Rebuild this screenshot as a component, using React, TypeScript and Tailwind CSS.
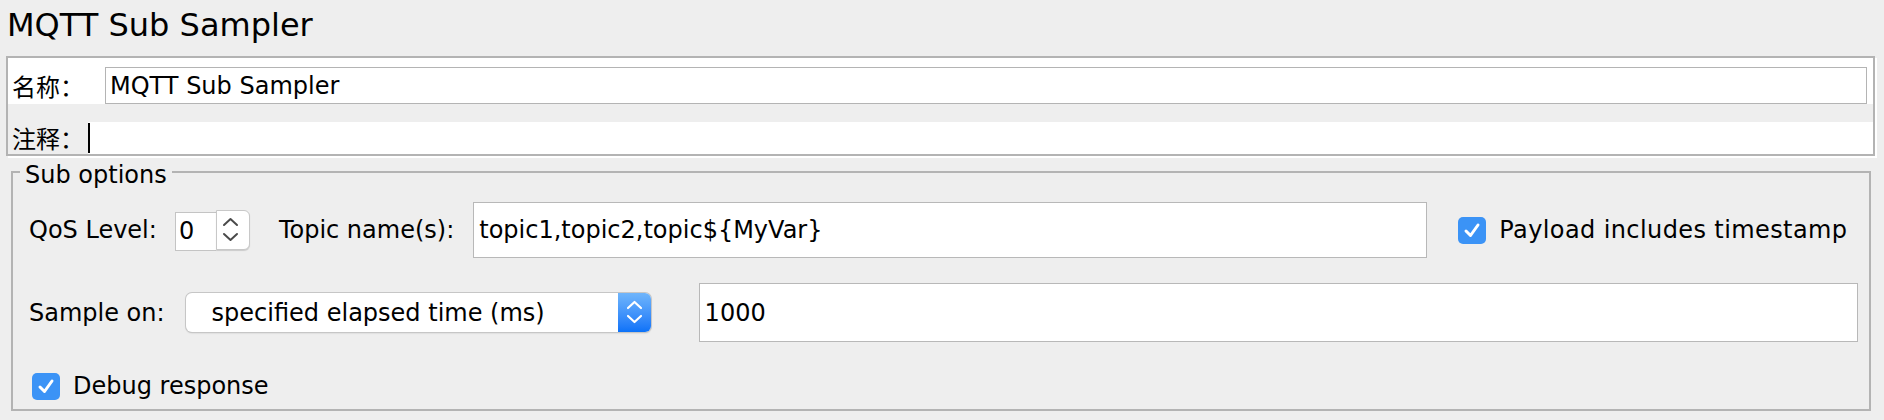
function Check({ className }: { className: string }) {
  return (
    <div className={`flex h-[27px] w-[28px] items-center justify-center rounded-[5px] bg-[#3b93f6] ${className}`}>
      <svg width="28" height="27" viewBox="0 0 28 27" fill="none">
        <polyline points="8,14 12.5,18.5 20,8" stroke="#ffffff" strokeWidth="3" strokeLinecap="round" strokeLinejoin="round" />
      </svg>
    </div>
  );
}

function Spinner() {
  return (
    <div className="ml-[18px] flex h-[41px] items-start">
      <div className="mt-[2px] flex h-[39px] w-[41px] items-center border border-[#c4c4c4] border-r-0 bg-white pl-[3px]">0</div>
      <div className="h-[40px] w-[34px] rounded-r-[6px] border border-[#c8c8c8] bg-white shadow-[0_1px_1px_rgba(0,0,0,0.15)]">
        <svg width="32" height="38" viewBox="0 0 32 38" fill="none">
          <polyline points="7,14 13.5,8 20,14" stroke="#4a4a4a" strokeWidth="2" strokeLinecap="round" strokeLinejoin="round" />
          <polyline points="7,23 13.5,29 20,23" stroke="#4a4a4a" strokeWidth="2" strokeLinecap="round" strokeLinejoin="round" />
        </svg>
      </div>
    </div>
  );
}

function Combo() {
  return (
    <div className="ml-[21px] flex h-[39px] w-[465px] overflow-hidden rounded-[6px] bg-white shadow-[0_0_0_1px_#c6c6c6,0_1px_2px_rgba(0,0,0,0.2)]">
      <div className="flex flex-1 items-center pl-[26px]">specified elapsed time (ms)</div>
      <div className="h-[39px] w-[33px] bg-gradient-to-b from-[#6fb5fb] to-[#0a72f8]">
        <svg width="33" height="39" viewBox="0 0 33 39" fill="none">
          <polyline points="10,15 16.5,9 23,15" stroke="#ffffff" strokeWidth="2.2" strokeLinecap="round" strokeLinejoin="round" />
          <polyline points="10,23 16.5,29 23,23" stroke="#ffffff" strokeWidth="2.2" strokeLinecap="round" strokeLinejoin="round" />
        </svg>
      </div>
    </div>
  );
}

export default function App() {
  return (
    <div className="h-[420px] w-[1884px] overflow-hidden bg-[#eeeeee] font-['DejaVu_Sans','Noto_Sans_CJK_SC',sans-serif] text-[24px] text-black">
      <div className="h-[56px] pl-[7px] pt-[7px] text-[32px] leading-[37px]">MQTT Sub Sampler</div>

      <div className="ml-[6px] w-[1869px] border-2 border-[#b3b3b3] shadow-[2px_2px_0_#ffffff]">
        <div className="flex h-[46px] items-end bg-white">
          <div className="flex h-[37px] w-[97px] items-center pl-[4px] font-['Noto_Sans_CJK_SC',sans-serif]">名称：</div>
          <div className="flex h-[37px] w-[1762px] items-center border border-[#b4b4b4] pl-[4px]">MQTT Sub Sampler</div>
        </div>
        <div className="h-[18px]" />
        <div className="flex h-[32px]">
          <div className="flex w-[80px] items-center pl-[4px] font-['Noto_Sans_CJK_SC',sans-serif]">注释：</div>
          <div className="flex-1 bg-white pt-[1px]">
            <div className="h-[30px] w-[2px] bg-black" />
          </div>
        </div>
      </div>

      <fieldset className="ml-[11px] mt-[2px] h-[253px] w-[1860px] border-2 border-[#b3b3b3] px-0 pb-0 pt-[16px]">
        <legend className="ml-[7px] px-[5px] leading-[28px]">
          <span className="relative top-[3px]">Sub options</span>
        </legend>

        <div className="flex h-[56px] items-center pl-[16px]">
          <span>QoS Level:</span>
          <Spinner />
          <span className="ml-[29px]">Topic name(s):</span>
          <div className="ml-[19px] flex h-[56px] w-[954px] items-center border border-[#b8b8b8] bg-white pl-[5px]">
            topic1,topic2,topic{"${MyVar}"}
          </div>
          <Check className="ml-[31px]" />
          <span className="ml-[13px] tracking-[0.4px]">Payload includes timestamp</span>
        </div>

        <div className="mt-[25px] flex h-[59px] items-center pl-[16px]">
          <span>Sample on:</span>
          <Combo />
          <div className="ml-[48px] flex h-[59px] w-[1159px] items-center border border-[#b8b8b8] bg-white pl-[5px]">1000</div>
        </div>

        <div className="mt-[30px] flex h-[28px] items-center pl-[19px]">
          <Check className="" />
          <span className="ml-[13px]">Debug response</span>
        </div>
      </fieldset>
    </div>
  );
}
